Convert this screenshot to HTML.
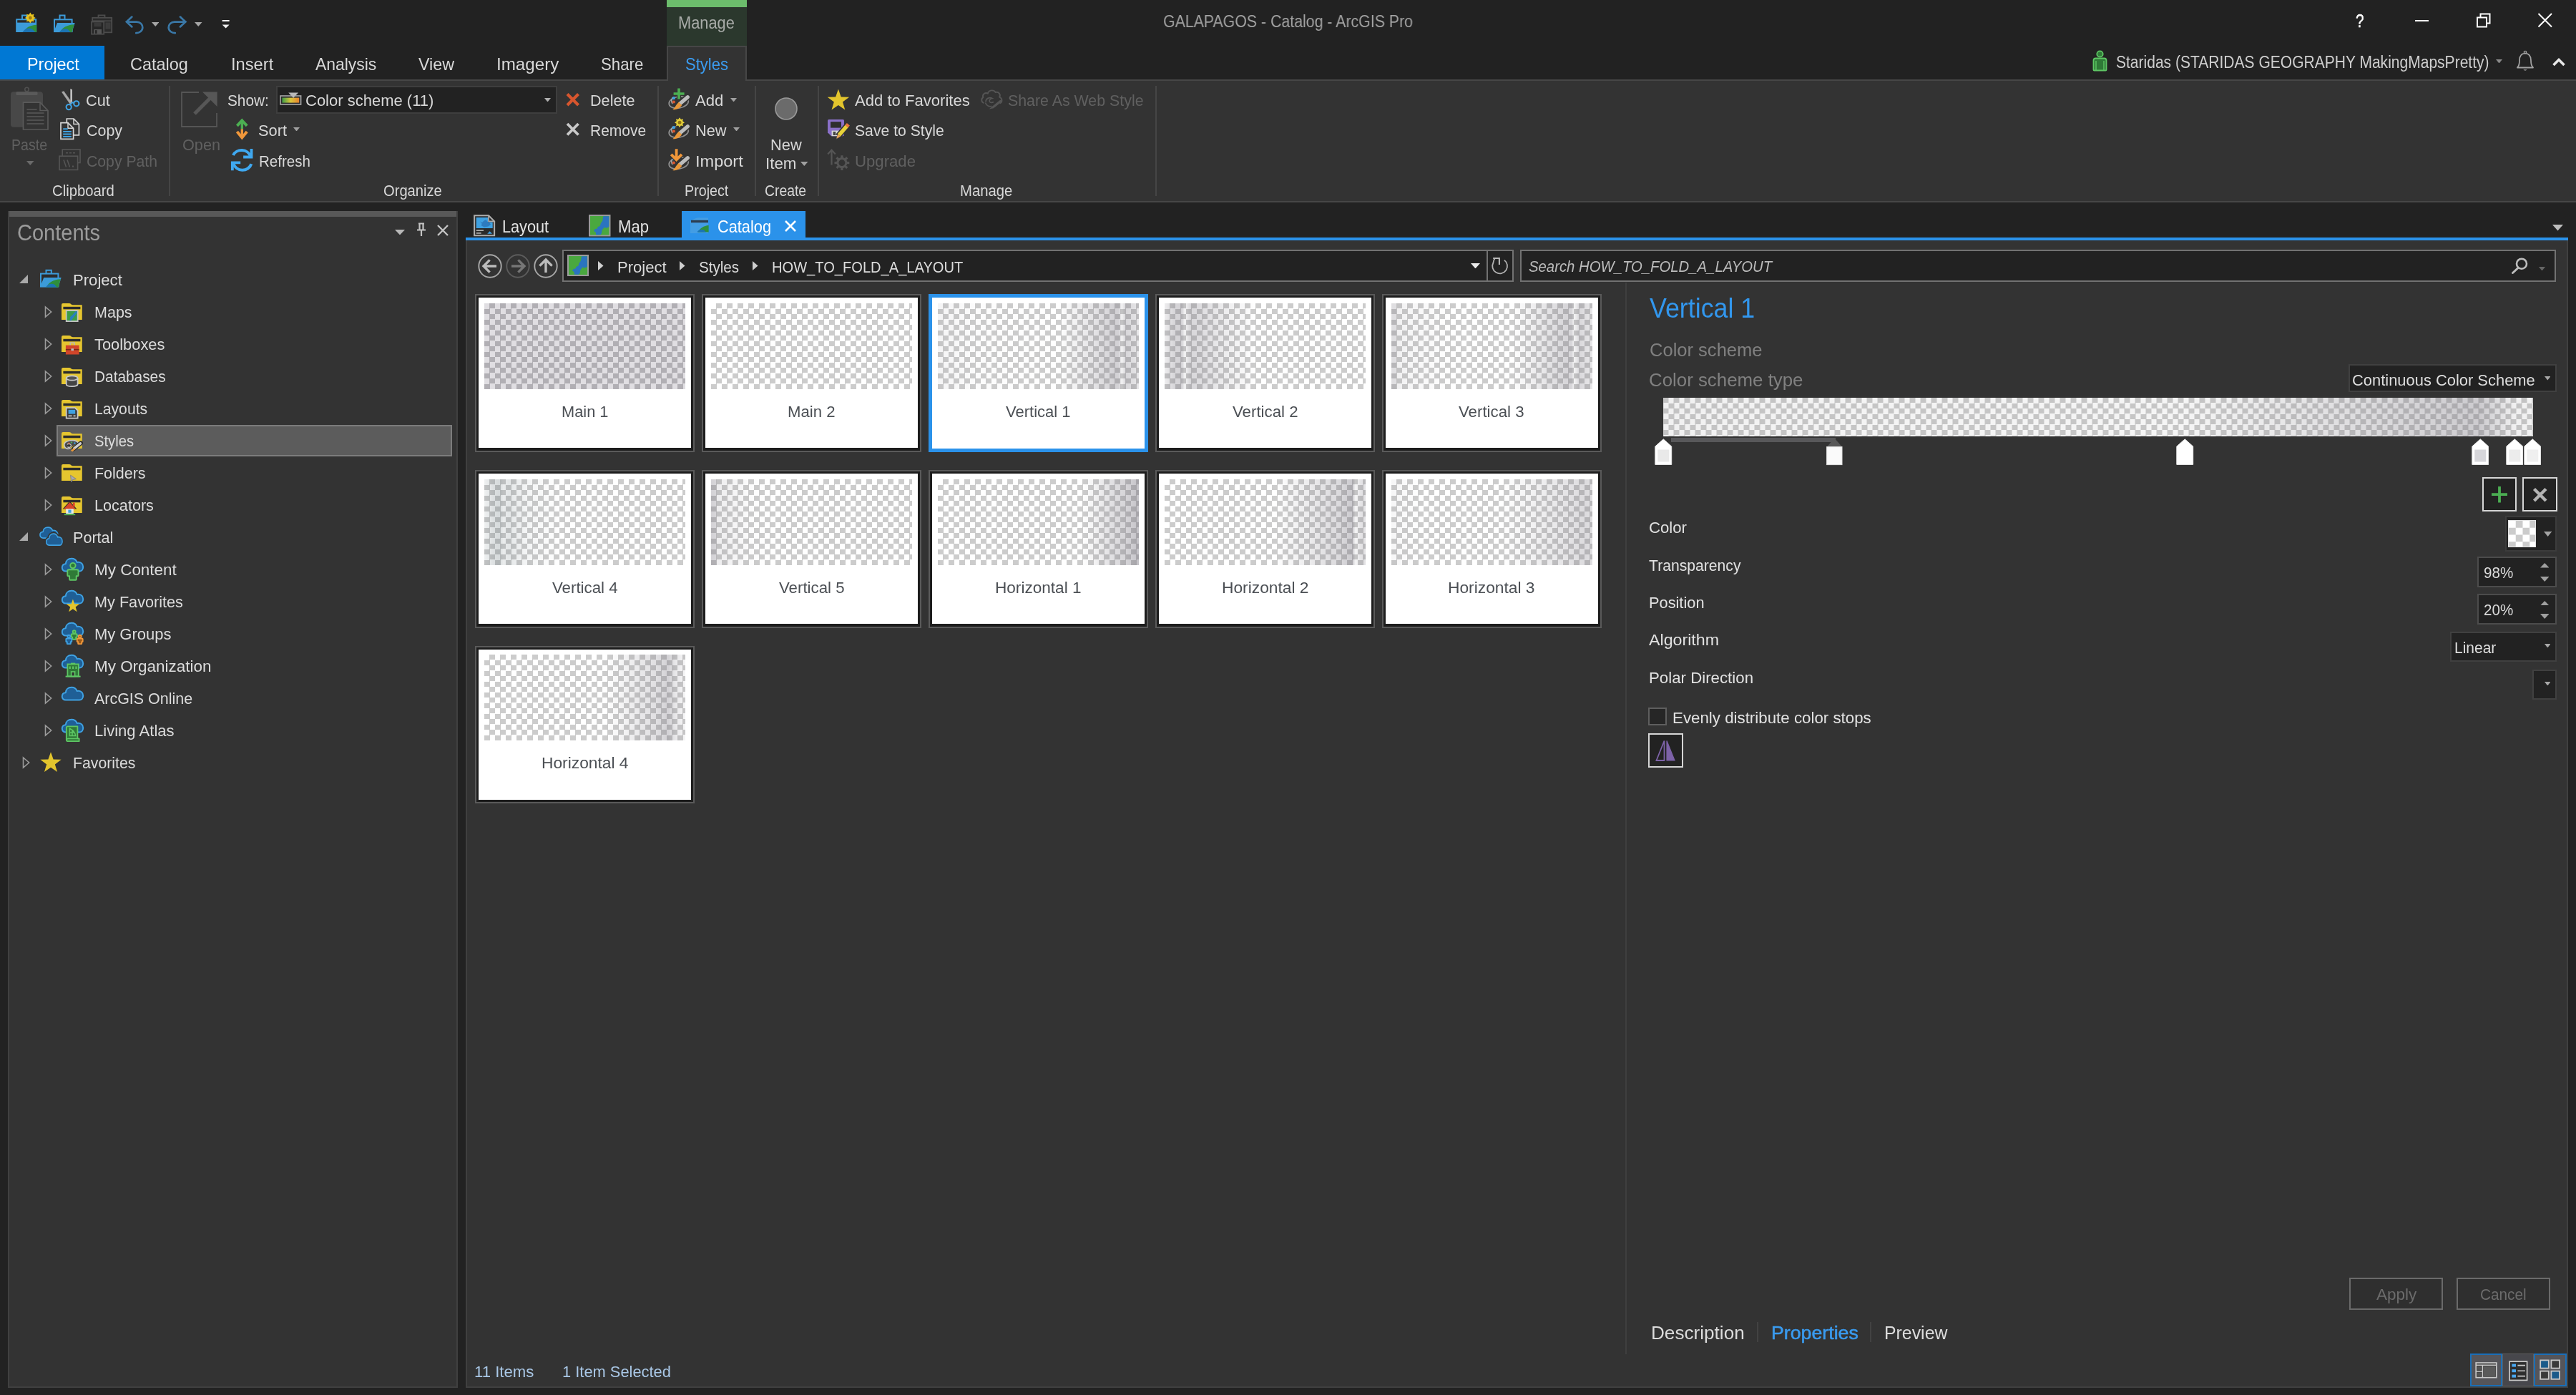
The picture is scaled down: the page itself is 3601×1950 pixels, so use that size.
<!DOCTYPE html>
<html><head><meta charset="utf-8"><title>ArcGIS Pro</title><style>
html,body{margin:0;padding:0}
body{width:3601px;height:1950px;overflow:hidden;background:#222222;position:relative;font-family:"Liberation Sans",sans-serif}
#root{position:absolute;left:0;top:0;width:3601px;height:1950px;will-change:transform}
.a{position:absolute;box-sizing:border-box;display:block}
.t{position:absolute;white-space:pre;line-height:1;display:block;transform-origin:0 0}
</style></head><body><div id="root">
<div class="a" style="left:932px;top:0px;width:112px;height:10px;background:#6cbd6c;"></div>
<div class="a" style="left:932px;top:10px;width:112px;height:54px;background:#2b382d;"></div>
<span class="t" style="left:947.75px;top:21px;font-size:23px;color:#a9aca9;transform:scaleX(0.9474);">Manage</span>
<span class="t" style="left:1626.00px;top:19px;font-size:23px;color:#a3a3a3;transform:scaleX(0.9266);">GALAPAGOS - Catalog - ArcGIS Pro</span>
<span class="t" style="left:3293.20px;top:16px;font-size:26px;color:#ffffff;transform:scaleX(0.8024);-webkit-text-stroke:0.5px #ffffff;">?</span>
<svg class="a" style="left:3370px;top:10px;" width="40" height="40" viewBox="0 0 40 40"><path d="M6 19H25" stroke="#fff" stroke-width="2" fill="none"/></svg>
<svg class="a" style="left:3455px;top:10px;" width="40" height="40" viewBox="0 0 40 40"><path d="M8 14.5H21V27.5H8Z M12.5 14V9.5H25.5V22.5H21.5" stroke="#fff" stroke-width="2" fill="none"/></svg>
<svg class="a" style="left:3540px;top:10px;" width="40" height="40" viewBox="0 0 40 40"><path d="M8.5 9L27 27.5M27 9L8.5 27.5" stroke="#fff" stroke-width="2" fill="none"/></svg>
<div class="a" style="left:0px;top:64px;width:146px;height:47px;background:#0078d4;"></div>
<span class="t" style="left:37.50px;top:78px;font-size:24px;color:#ffffff;transform:scaleX(0.9741);">Project</span>
<span class="t" style="left:181.75px;top:78px;font-size:24px;color:#d8d8d8;transform:scaleX(0.9761);">Catalog</span>
<div class="a" style="left:0px;top:111px;width:3601px;height:172px;background:#333333;border-top:2px solid #464646;border-bottom:2px solid #464646;"></div>
<div class="a" style="left:932px;top:64px;width:112px;height:49px;background:#333333;border:2px solid #464646;border-bottom:none;"></div>
<span class="t" style="left:958.00px;top:78px;font-size:24px;color:#3b9cf0;transform:scaleX(0.9181);">Styles</span>
<span class="t" style="left:322.50px;top:78px;font-size:24px;color:#d8d8d8;transform:scaleX(0.9871);">Insert</span>
<span class="t" style="left:440.50px;top:78px;font-size:24px;color:#d8d8d8;transform:scaleX(0.9538);">Analysis</span>
<span class="t" style="left:585.00px;top:78px;font-size:24px;color:#d8d8d8;transform:scaleX(0.9681);">View</span>
<span class="t" style="left:693.50px;top:78px;font-size:24px;color:#d8d8d8;transform:scaleX(1.0065);">Imagery</span>
<span class="t" style="left:839.75px;top:78px;font-size:24px;color:#d8d8d8;transform:scaleX(0.9253);">Share</span>
<span class="t" style="left:2958.00px;top:76px;font-size:23px;color:#cfcfcf;transform:scaleX(0.9142);">Staridas (STARIDAS GEOGRAPHY MakingMapsPretty)</span>
<svg class="a" style="left:3489px;top:82.5px;" width="9" height="5.5" viewBox="0 0 9 5.5"><path d="M0 0H9L4.5 5.5Z" fill="#8a8a8a"/></svg>
<svg class="a" style="left:3566px;top:78px;" width="22" height="18" viewBox="0 0 22 18"><path d="M3.5 13L11 5.5L18.5 13" stroke="#e8e8e8" stroke-width="3.6" fill="none"/></svg>
<div class="a" style="left:236px;top:120px;width:1.5px;height:154px;background:#454545;"></div>
<div class="a" style="left:919px;top:120px;width:1.5px;height:154px;background:#454545;"></div>
<div class="a" style="left:1055px;top:120px;width:1.5px;height:154px;background:#454545;"></div>
<div class="a" style="left:1143px;top:120px;width:1.5px;height:154px;background:#454545;"></div>
<div class="a" style="left:1615px;top:120px;width:1.5px;height:154px;background:#454545;"></div>
<span class="t" style="left:16.25px;top:191.5px;font-size:22px;color:#606060;transform:scaleX(0.8888);">Paste</span>
<svg class="a" style="left:37px;top:225px;" width="10.5" height="6" viewBox="0 0 10.5 6"><path d="M0 0H10.5L5.25 6Z" fill="#6a6a6a"/></svg>
<span class="t" style="left:120.25px;top:130px;font-size:22px;color:#d8d8d8;transform:scaleX(0.9859);">Cut</span>
<span class="t" style="left:120.50px;top:171.5px;font-size:22px;color:#d8d8d8;transform:scaleX(0.9737);">Copy</span>
<span class="t" style="left:120.50px;top:214.5px;font-size:22px;color:#606060;transform:scaleX(0.9638);">Copy Path</span>
<span class="t" style="left:73.25px;top:255.75px;font-size:22px;color:#d8d8d8;transform:scaleX(0.9213);">Clipboard</span>
<span class="t" style="left:255.00px;top:191.5px;font-size:22px;color:#606060;transform:scaleX(0.9849);">Open</span>
<span class="t" style="left:318.00px;top:130px;font-size:22px;color:#d8d8d8;transform:scaleX(0.9446);">Show:</span>
<div class="a" style="left:386px;top:119.5px;width:393px;height:39px;background:#222222;border:2px solid #3e3e3e;"></div>
<span class="t" style="left:427.00px;top:130px;font-size:22px;color:#d8d8d8;">Color scheme (11)</span>
<svg class="a" style="left:761px;top:136.5px;" width="9" height="5.5" viewBox="0 0 9 5.5"><path d="M0 0H9L4.5 5.5Z" fill="#b0b0b0"/></svg>
<span class="t" style="left:361.25px;top:171.5px;font-size:22px;color:#d8d8d8;transform:scaleX(0.9914);">Sort</span>
<svg class="a" style="left:410px;top:177.5px;" width="9" height="5.5" viewBox="0 0 9 5.5"><path d="M0 0H9L4.5 5.5Z" fill="#a0a0a0"/></svg>
<span class="t" style="left:361.75px;top:214.5px;font-size:22px;color:#d8d8d8;transform:scaleX(0.9348);">Refresh</span>
<span class="t" style="left:536.25px;top:255.75px;font-size:22px;color:#d8d8d8;transform:scaleX(0.9157);">Organize</span>
<span class="t" style="left:824.50px;top:130px;font-size:22px;color:#d8d8d8;transform:scaleX(0.9827);">Delete</span>
<span class="t" style="left:824.50px;top:171.5px;font-size:22px;color:#d8d8d8;transform:scaleX(0.9551);">Remove</span>
<svg class="a" style="left:790px;top:128px;" width="22" height="22" viewBox="0 0 22 22"><path d="M3 3.5L18.5 19M18.5 3.5L3 19" stroke="#d8562e" stroke-width="4.2" fill="none"/></svg>
<svg class="a" style="left:790px;top:169px;" width="22" height="22" viewBox="0 0 22 22"><path d="M3 4L18.5 19.5M18.5 4L3 19.5" stroke="#c9c9c9" stroke-width="3.8" fill="none"/></svg>
<span class="t" style="left:972.25px;top:130px;font-size:22px;color:#d8d8d8;transform:scaleX(1.0029);">Add</span>
<svg class="a" style="left:1020.75px;top:136.5px;" width="9" height="5.5" viewBox="0 0 9 5.5"><path d="M0 0H9L4.5 5.5Z" fill="#a0a0a0"/></svg>
<span class="t" style="left:972.25px;top:171.5px;font-size:22px;color:#d8d8d8;transform:scaleX(0.9872);">New</span>
<svg class="a" style="left:1024.5px;top:177.5px;" width="9" height="5.5" viewBox="0 0 9 5.5"><path d="M0 0H9L4.5 5.5Z" fill="#a0a0a0"/></svg>
<span class="t" style="left:972.25px;top:214.5px;font-size:22px;color:#d8d8d8;transform:scaleX(1.0706);">Import</span>
<span class="t" style="left:957.00px;top:255.75px;font-size:22px;color:#d8d8d8;transform:scaleX(0.8946);">Project</span>
<svg class="a" style="left:1082px;top:135px;" width="34" height="34" viewBox="0 0 34 34"><circle cx="17" cy="17" r="15" fill="#6b6b6b" stroke="#9a9a9a" stroke-width="1.6"/></svg>
<span class="t" style="left:1077.25px;top:191.5px;font-size:22px;color:#d8d8d8;transform:scaleX(0.9928);">New</span>
<span class="t" style="left:1069.75px;top:217.75px;font-size:22px;color:#d8d8d8;transform:scaleX(1.0166);">Item</span>
<svg class="a" style="left:1119px;top:225.5px;" width="10.5" height="6" viewBox="0 0 10.5 6"><path d="M0 0H10.5L5.25 6Z" fill="#a0a0a0"/></svg>
<span class="t" style="left:1069.00px;top:255.75px;font-size:22px;color:#d8d8d8;transform:scaleX(0.8785);">Create</span>
<span class="t" style="left:1195.25px;top:130px;font-size:22px;color:#d8d8d8;transform:scaleX(1.0035);">Add to Favorites</span>
<span class="t" style="left:1195.25px;top:171.5px;font-size:22px;color:#d8d8d8;transform:scaleX(0.9624);">Save to Style</span>
<span class="t" style="left:1195.25px;top:214.5px;font-size:22px;color:#606060;transform:scaleX(1.0072);">Upgrade</span>
<span class="t" style="left:1409.25px;top:130px;font-size:22px;color:#606060;transform:scaleX(0.9706);">Share As Web Style</span>
<span class="t" style="left:1341.75px;top:255.75px;font-size:22px;color:#d8d8d8;transform:scaleX(0.9213);">Manage</span>
<div class="a" style="left:11.4px;top:294.7px;width:628.4px;height:1645.3px;background:#333333;border:2px solid #404040;"></div>
<div class="a" style="left:13.4px;top:294.7px;width:624.6px;height:8.7px;background:#585858;"></div>
<span class="t" style="left:23.70px;top:310px;font-size:31px;color:#9b9b9b;transform:scaleX(0.9358);">Contents</span>
<svg class="a" style="left:552px;top:320.5px;" width="14" height="7.5" viewBox="0 0 14 7.5"><path d="M0 0H14L7.0 7.5Z" fill="#b8b8b8"/></svg>
<svg class="a" style="left:580px;top:310px;" width="18" height="22" viewBox="0 0 18 22"><path d="M5 2.5H13M6.5 2.5V11M11.5 2.5V11M3 11.5H15M9 12V20" stroke="#c4c4c4" stroke-width="2.2" fill="none"/></svg>
<svg class="a" style="left:609px;top:312px;" width="20" height="20" viewBox="0 0 20 20"><path d="M3 3L17 17M17 3L3 17" stroke="#c4c4c4" stroke-width="2.4" fill="none"/></svg>
<div class="a" style="left:79px;top:593.5px;width:553px;height:44px;background:#5c5c5c;border:2px solid #7c7c7c;"></div>
<span class="t" style="left:101.60px;top:381.3px;font-size:22px;color:#dcdcdc;transform:scaleX(1.0049);">Project</span>
<svg class="a" style="left:26px;top:383px;" width="14" height="14" viewBox="0 0 14 14"><path d="M13 1V13H1Z" fill="#a9a9a9"/></svg>
<span class="t" style="left:131.90px;top:426.3px;font-size:22px;color:#dcdcdc;transform:scaleX(0.9779);">Maps</span>
<svg class="a" style="left:61.6px;top:427px;" width="12" height="18" viewBox="0 0 12 18"><path d="M1.5 2L9.6 9L1.5 16Z" fill="none" stroke="#9c9c9c" stroke-width="1.6"/></svg>
<span class="t" style="left:131.90px;top:471.3px;font-size:22px;color:#dcdcdc;transform:scaleX(0.9933);">Toolboxes</span>
<svg class="a" style="left:61.6px;top:472px;" width="12" height="18" viewBox="0 0 12 18"><path d="M1.5 2L9.6 9L1.5 16Z" fill="none" stroke="#9c9c9c" stroke-width="1.6"/></svg>
<span class="t" style="left:131.90px;top:516.3px;font-size:22px;color:#dcdcdc;transform:scaleX(0.9469);">Databases</span>
<svg class="a" style="left:61.6px;top:517px;" width="12" height="18" viewBox="0 0 12 18"><path d="M1.5 2L9.6 9L1.5 16Z" fill="none" stroke="#9c9c9c" stroke-width="1.6"/></svg>
<span class="t" style="left:131.90px;top:561.3px;font-size:22px;color:#dcdcdc;transform:scaleX(0.9618);">Layouts</span>
<svg class="a" style="left:61.6px;top:562px;" width="12" height="18" viewBox="0 0 12 18"><path d="M1.5 2L9.6 9L1.5 16Z" fill="none" stroke="#9c9c9c" stroke-width="1.6"/></svg>
<span class="t" style="left:131.90px;top:606.3px;font-size:22px;color:#dcdcdc;transform:scaleX(0.9198);">Styles</span>
<svg class="a" style="left:61.6px;top:607px;" width="12" height="18" viewBox="0 0 12 18"><path d="M1.5 2L9.6 9L1.5 16Z" fill="none" stroke="#9c9c9c" stroke-width="1.6"/></svg>
<span class="t" style="left:131.90px;top:651.3px;font-size:22px;color:#dcdcdc;transform:scaleX(0.9759);">Folders</span>
<svg class="a" style="left:61.6px;top:652px;" width="12" height="18" viewBox="0 0 12 18"><path d="M1.5 2L9.6 9L1.5 16Z" fill="none" stroke="#9c9c9c" stroke-width="1.6"/></svg>
<span class="t" style="left:131.90px;top:696.3px;font-size:22px;color:#dcdcdc;transform:scaleX(0.9826);">Locators</span>
<svg class="a" style="left:61.6px;top:697px;" width="12" height="18" viewBox="0 0 12 18"><path d="M1.5 2L9.6 9L1.5 16Z" fill="none" stroke="#9c9c9c" stroke-width="1.6"/></svg>
<span class="t" style="left:101.60px;top:741.3px;font-size:22px;color:#dcdcdc;transform:scaleX(0.9815);">Portal</span>
<svg class="a" style="left:26px;top:743px;" width="14" height="14" viewBox="0 0 14 14"><path d="M13 1V13H1Z" fill="#a9a9a9"/></svg>
<span class="t" style="left:131.90px;top:786.3px;font-size:22px;color:#dcdcdc;transform:scaleX(1.0206);">My Content</span>
<svg class="a" style="left:61.6px;top:787px;" width="12" height="18" viewBox="0 0 12 18"><path d="M1.5 2L9.6 9L1.5 16Z" fill="none" stroke="#9c9c9c" stroke-width="1.6"/></svg>
<span class="t" style="left:131.90px;top:831.3px;font-size:22px;color:#dcdcdc;transform:scaleX(0.9841);">My Favorites</span>
<svg class="a" style="left:61.6px;top:832px;" width="12" height="18" viewBox="0 0 12 18"><path d="M1.5 2L9.6 9L1.5 16Z" fill="none" stroke="#9c9c9c" stroke-width="1.6"/></svg>
<span class="t" style="left:131.90px;top:876.3px;font-size:22px;color:#dcdcdc;">My Groups</span>
<svg class="a" style="left:61.6px;top:877px;" width="12" height="18" viewBox="0 0 12 18"><path d="M1.5 2L9.6 9L1.5 16Z" fill="none" stroke="#9c9c9c" stroke-width="1.6"/></svg>
<span class="t" style="left:131.90px;top:921.3px;font-size:22px;color:#dcdcdc;transform:scaleX(1.0201);">My Organization</span>
<svg class="a" style="left:61.6px;top:922px;" width="12" height="18" viewBox="0 0 12 18"><path d="M1.5 2L9.6 9L1.5 16Z" fill="none" stroke="#9c9c9c" stroke-width="1.6"/></svg>
<span class="t" style="left:131.90px;top:966.3px;font-size:22px;color:#dcdcdc;transform:scaleX(0.9751);">ArcGIS Online</span>
<svg class="a" style="left:61.6px;top:967px;" width="12" height="18" viewBox="0 0 12 18"><path d="M1.5 2L9.6 9L1.5 16Z" fill="none" stroke="#9c9c9c" stroke-width="1.6"/></svg>
<span class="t" style="left:131.90px;top:1011.3px;font-size:22px;color:#dcdcdc;transform:scaleX(1.0027);">Living Atlas</span>
<svg class="a" style="left:61.6px;top:1012px;" width="12" height="18" viewBox="0 0 12 18"><path d="M1.5 2L9.6 9L1.5 16Z" fill="none" stroke="#9c9c9c" stroke-width="1.6"/></svg>
<span class="t" style="left:101.60px;top:1056.3px;font-size:22px;color:#dcdcdc;transform:scaleX(0.9661);">Favorites</span>
<svg class="a" style="left:31.2px;top:1057px;" width="12" height="18" viewBox="0 0 12 18"><path d="M1.5 2L9.6 9L1.5 16Z" fill="none" stroke="#9c9c9c" stroke-width="1.6"/></svg>
<span class="t" style="left:702.00px;top:304.5px;font-size:24px;color:#e4e4e4;transform:scaleX(0.9022);">Layout</span>
<span class="t" style="left:863.50px;top:304.5px;font-size:24px;color:#e4e4e4;transform:scaleX(0.9212);">Map</span>
<div class="a" style="left:952.5px;top:294.5px;width:173px;height:39px;background:#2b92ea;"></div>
<span class="t" style="left:1003.25px;top:304.5px;font-size:24px;color:#ffffff;transform:scaleX(0.9066);">Catalog</span>
<svg class="a" style="left:1095px;top:306px;" width="20" height="20" viewBox="0 0 20 20"><path d="M3 3L17 17M17 3L3 17" stroke="#fff" stroke-width="2.6" fill="none"/></svg>
<svg class="a" style="left:3567.75px;top:314px;" width="15" height="8.5" viewBox="0 0 15 8.5"><path d="M0 0H15L7.5 8.5Z" fill="#bdbdbd"/></svg>
<div class="a" style="left:650.7px;top:332px;width:2939.5px;height:4.3px;background:#2b92ea;"></div>
<div class="a" style="left:650.7px;top:336px;width:2939.5px;height:1604px;background:#333333;border-left:2px solid #404040;border-right:2px solid #404040;border-bottom:2px solid #404040;"></div>
<svg class="a" style="left:666.6px;top:353.5px;" width="36" height="36" viewBox="0 0 36 36"><circle cx="18" cy="18" r="15.7" fill="none" stroke="#a8a8a8" stroke-width="1.9"/><path d="M27 18H10M17.6 9.4L9 18L17.6 26.6" stroke="#bcbcbc" stroke-width="3.4" fill="none"/></svg>
<svg class="a" style="left:705.75px;top:353.5px;" width="36" height="36" viewBox="0 0 36 36"><circle cx="18" cy="18" r="15.7" fill="none" stroke="#5c5c5c" stroke-width="1.9"/><path d="M9 18H26M18.4 9.4L27 18L18.4 26.6" stroke="#767676" stroke-width="3.4" fill="none"/></svg>
<svg class="a" style="left:745.1px;top:353.5px;" width="36" height="36" viewBox="0 0 36 36"><circle cx="18" cy="18" r="15.7" fill="none" stroke="#a8a8a8" stroke-width="1.9"/><path d="M18 27V10M9.4 17.6L18 9L26.6 17.6" stroke="#bcbcbc" stroke-width="3.4" fill="none"/></svg>
<div class="a" style="left:786.25px;top:349px;width:1329.25px;height:45px;background:#222222;border:2px solid #727272;"></div>
<div class="a" style="left:2078px;top:350px;width:2px;height:43px;background:#727272;"></div>
<svg class="a" style="left:836px;top:365px;" width="8" height="13" viewBox="0 0 8 13"><path d="M0 0L7.5 6.5L0 13Z" fill="#d0d0d0"/></svg>
<svg class="a" style="left:950px;top:365px;" width="8" height="13" viewBox="0 0 8 13"><path d="M0 0L7.5 6.5L0 13Z" fill="#d0d0d0"/></svg>
<svg class="a" style="left:1052px;top:365px;" width="8" height="13" viewBox="0 0 8 13"><path d="M0 0L7.5 6.5L0 13Z" fill="#d0d0d0"/></svg>
<span class="t" style="left:863.30px;top:363px;font-size:22px;color:#dcdcdc;transform:scaleX(1.0034);">Project</span>
<span class="t" style="left:977.20px;top:363px;font-size:22px;color:#dcdcdc;transform:scaleX(0.9365);">Styles</span>
<span class="t" style="left:1078.70px;top:363px;font-size:22px;color:#dcdcdc;transform:scaleX(0.9135);">HOW_TO_FOLD_A_LAYOUT</span>
<svg class="a" style="left:2055.7px;top:367.6px;" width="13" height="7.4" viewBox="0 0 13 7.4"><path d="M0 0H13L6.5 7.4Z" fill="#ececec"/></svg>
<svg class="a" style="left:2083px;top:358px;" width="28" height="28" viewBox="0 0 28 28"><path d="M19.9 5.6A10.4 10.4 0 1 1 4.5 9Q4.8 5.4 6.6 3.4" stroke="#b2b2b2" stroke-width="1.8" fill="none"/><path d="M4.2 3H13.9M12.9 2V12.1" stroke="#b8b8b8" stroke-width="2.1" fill="none"/></svg>
<div class="a" style="left:2125px;top:349px;width:1448px;height:45px;background:#222222;border:2px solid #727272;"></div>
<span class="t" style="left:2136.60px;top:362px;font-size:22px;color:#bcbcbc;transform:scaleX(0.9234);font-style:italic;">Search HOW_TO_FOLD_A_LAYOUT</span>
<svg class="a" style="left:3508px;top:356px;" width="30" height="30" viewBox="0 0 30 30"><circle cx="17" cy="12.7" r="7" stroke="#bdbdbd" stroke-width="2.6" fill="none"/><path d="M12 18.5L4.5 25.5" stroke="#bdbdbd" stroke-width="3" stroke-linecap="round"/></svg>
<svg class="a" style="left:3549px;top:372.5px;" width="9" height="5.5" viewBox="0 0 9 5.5"><path d="M0 0H9L4.5 5.5Z" fill="#666"/></svg>
<span class="t" style="left:663.20px;top:1907.3px;font-size:22px;color:#a9c7e6;transform:scaleX(1.0067);">11 Items</span>
<span class="t" style="left:785.50px;top:1907.3px;font-size:22px;color:#a9c7e6;transform:scaleX(0.9937);">1 Item Selected</span>
<div class="a" style="left:664.4px;top:411.25px;width:306.85px;height:220.8px;background:#1d1d1d;border:2px solid #5a5a5a;"></div>
<div class="a" style="left:669.4px;top:416.25px;width:296.7px;height:210.2px;background:#ffffff;"></div>
<div class="a" style="left:677.20px;top:424.00px;width:281px;height:120px;background-color:#e0dee2;background-image:conic-gradient(#b1afb4 25%,#e0dee2 0 50%,#b1afb4 0 75%,#e0dee2 0);background-size:15px 15px;background-position:0 0"></div>
<span class="t" style="left:784.65px;top:565.15px;font-size:22.5px;color:#4b4f54;transform:scaleX(0.9700);">Main 1</span>
<div class="a" style="left:981.3499999999999px;top:411.25px;width:306.85px;height:220.8px;background:#1d1d1d;border:2px solid #5a5a5a;"></div>
<div class="a" style="left:986.3499999999999px;top:416.25px;width:296.7px;height:210.2px;background:#ffffff;"></div>
<div class="a" style="left:994.15px;top:424.00px;width:281px;height:120px;background-color:#ffffff;background-image:conic-gradient(#cccccc 25%,#ffffff 0 50%,#cccccc 0 75%,#ffffff 0);background-size:15px 15px;background-position:0 0"></div>
<span class="t" style="left:1101.10px;top:565.15px;font-size:22.5px;color:#4b4f54;transform:scaleX(0.9849);">Main 2</span>
<div class="a" style="left:1298.3px;top:411.25px;width:306.85px;height:220.8px;background:#ffffff;border:5px solid #2b92ea;"></div>
<div class="a" style="left:1311.10px;top:424.00px;width:281px;height:120px;background-color:#ffffff;background-image:conic-gradient(#cccccc 25%,#ffffff 0 50%,#cccccc 0 75%,#ffffff 0);background-size:15px 15px;background-position:0 0"></div>
<div class="a" style="left:1311.10px;top:424.00px;width:281px;height:120px;background:linear-gradient(90deg,rgba(110,106,118,0.07) 0.0%,rgba(110,106,118,0.02) 20.0%,rgba(110,106,118,0) 60.0%,rgba(110,106,118,0.3) 88.5%,rgba(110,106,118,0.3) 90.0%,rgba(110,106,118,0.08) 91.5%,rgba(110,106,118,0.28) 93.5%,rgba(110,106,118,0.16) 100.0%)"></div>
<span class="t" style="left:1406.05px;top:565.15px;font-size:22.5px;color:#4b4f54;transform:scaleX(0.9779);">Vertical 1</span>
<div class="a" style="left:1615.25px;top:411.25px;width:306.85px;height:220.8px;background:#1d1d1d;border:2px solid #5a5a5a;"></div>
<div class="a" style="left:1620.25px;top:416.25px;width:296.7px;height:210.2px;background:#ffffff;"></div>
<div class="a" style="left:1628.05px;top:424.00px;width:281px;height:120px;background-color:#ffffff;background-image:conic-gradient(#cccccc 25%,#ffffff 0 50%,#cccccc 0 75%,#ffffff 0);background-size:15px 15px;background-position:0 0"></div>
<div class="a" style="left:1628.05px;top:424.00px;width:281px;height:120px;background:linear-gradient(90deg,rgba(110,106,118,0.12) 0.0%,rgba(110,106,118,0.28) 5.0%,rgba(110,106,118,0.3) 8.5%,rgba(110,106,118,0.08) 10.0%,rgba(110,106,118,0.27) 13.0%,rgba(110,106,118,0) 45.0%,rgba(110,106,118,0) 100.0%)"></div>
<span class="t" style="left:1722.50px;top:565.15px;font-size:22.5px;color:#4b4f54;transform:scaleX(0.9887);">Vertical 2</span>
<div class="a" style="left:1932.1999999999998px;top:411.25px;width:306.85px;height:220.8px;background:#1d1d1d;border:2px solid #5a5a5a;"></div>
<div class="a" style="left:1937.1999999999998px;top:416.25px;width:296.7px;height:210.2px;background:#ffffff;"></div>
<div class="a" style="left:1945.00px;top:424.00px;width:281px;height:120px;background-color:#ffffff;background-image:conic-gradient(#cccccc 25%,#ffffff 0 50%,#cccccc 0 75%,#ffffff 0);background-size:15px 15px;background-position:0 0"></div>
<div class="a" style="left:1945.00px;top:424.00px;width:281px;height:120px;background:linear-gradient(90deg,rgba(110,106,118,0.22) 0.0%,rgba(110,106,118,0.22) 2.3%,rgba(110,106,118,0.1) 2.5%,rgba(110,106,118,0.06) 10.0%,rgba(110,106,118,0) 30.0%,rgba(110,106,118,0) 60.0%,rgba(110,106,118,0.28) 87.0%,rgba(110,106,118,0.28) 89.5%,rgba(110,106,118,0.07) 91.0%,rgba(110,106,118,0.26) 93.5%,rgba(110,106,118,0.15) 100.0%)"></div>
<span class="t" style="left:2039.45px;top:565.15px;font-size:22.5px;color:#4b4f54;transform:scaleX(0.9887);">Vertical 3</span>
<div class="a" style="left:664.4px;top:656.875px;width:306.85px;height:220.8px;background:#1d1d1d;border:2px solid #5a5a5a;"></div>
<div class="a" style="left:669.4px;top:661.875px;width:296.7px;height:210.2px;background:#ffffff;"></div>
<div class="a" style="left:677.20px;top:669.62px;width:281px;height:120px;background-color:#ffffff;background-image:conic-gradient(#cccccc 25%,#ffffff 0 50%,#cccccc 0 75%,#ffffff 0);background-size:15px 15px;background-position:0 0"></div>
<div class="a" style="left:677.20px;top:669.62px;width:281px;height:120px;background:linear-gradient(90deg,rgba(95,112,118,0.1) 0.0%,rgba(95,112,118,0.22) 5.0%,rgba(95,112,118,0.26) 7.5%,rgba(95,112,118,0.13) 9.5%,rgba(95,112,118,0.17) 12.0%,rgba(95,112,118,0.08) 20.0%,rgba(95,112,118,0) 38.0%,rgba(95,112,118,0) 100.0%)"></div>
<span class="t" style="left:771.65px;top:810.775px;font-size:22.5px;color:#4b4f54;transform:scaleX(0.9887);">Vertical 4</span>
<div class="a" style="left:981.3499999999999px;top:656.875px;width:306.85px;height:220.8px;background:#1d1d1d;border:2px solid #5a5a5a;"></div>
<div class="a" style="left:986.3499999999999px;top:661.875px;width:296.7px;height:210.2px;background:#ffffff;"></div>
<div class="a" style="left:994.15px;top:669.62px;width:281px;height:120px;background-color:#ffffff;background-image:conic-gradient(#cccccc 25%,#ffffff 0 50%,#cccccc 0 75%,#ffffff 0);background-size:15px 15px;background-position:0 0"></div>
<div class="a" style="left:994.15px;top:669.62px;width:281px;height:120px;background:linear-gradient(90deg,rgba(110,106,118,0.3) 0.0%,rgba(110,106,118,0.28) 2.4%,rgba(110,106,118,0.12) 3.0%,rgba(110,106,118,0.08) 10.0%,rgba(110,106,118,0.02) 20.0%,rgba(110,106,118,0) 30.0%,rgba(110,106,118,0) 100.0%)"></div>
<span class="t" style="left:1088.60px;top:810.775px;font-size:22.5px;color:#4b4f54;transform:scaleX(0.9887);">Vertical 5</span>
<div class="a" style="left:1298.3px;top:656.875px;width:306.85px;height:220.8px;background:#1d1d1d;border:2px solid #5a5a5a;"></div>
<div class="a" style="left:1303.3px;top:661.875px;width:296.7px;height:210.2px;background:#ffffff;"></div>
<div class="a" style="left:1311.10px;top:669.62px;width:281px;height:120px;background-color:#ffffff;background-image:conic-gradient(#cccccc 25%,#ffffff 0 50%,#cccccc 0 75%,#ffffff 0);background-size:15px 15px;background-position:0 0"></div>
<div class="a" style="left:1311.10px;top:669.62px;width:281px;height:120px;background:linear-gradient(90deg,rgba(110,106,118,0) 0.0%,rgba(110,106,118,0) 72.0%,rgba(110,106,118,0.2) 86.0%,rgba(110,106,118,0.28) 93.0%,rgba(110,106,118,0.34) 97.0%,rgba(110,106,118,0.42) 100.0%)"></div>
<span class="t" style="left:1391.05px;top:810.775px;font-size:22.5px;color:#4b4f54;transform:scaleX(1.0037);">Horizontal 1</span>
<div class="a" style="left:1615.25px;top:656.875px;width:306.85px;height:220.8px;background:#1d1d1d;border:2px solid #5a5a5a;"></div>
<div class="a" style="left:1620.25px;top:661.875px;width:296.7px;height:210.2px;background:#ffffff;"></div>
<div class="a" style="left:1628.05px;top:669.62px;width:281px;height:120px;background-color:#ffffff;background-image:conic-gradient(#cccccc 25%,#ffffff 0 50%,#cccccc 0 75%,#ffffff 0);background-size:15px 15px;background-position:0 0"></div>
<div class="a" style="left:1628.05px;top:669.62px;width:281px;height:120px;background:linear-gradient(90deg,rgba(110,106,118,0) 0.0%,rgba(110,106,118,0) 55.0%,rgba(110,106,118,0.26) 88.0%,rgba(110,106,118,0.36) 93.5%,rgba(110,106,118,0.06) 95.0%,rgba(110,106,118,0.18) 97.5%,rgba(110,106,118,0.2) 100.0%)"></div>
<span class="t" style="left:1707.50px;top:810.775px;font-size:22.5px;color:#4b4f54;transform:scaleX(1.0120);">Horizontal 2</span>
<div class="a" style="left:1932.1999999999998px;top:656.875px;width:306.85px;height:220.8px;background:#1d1d1d;border:2px solid #5a5a5a;"></div>
<div class="a" style="left:1937.1999999999998px;top:661.875px;width:296.7px;height:210.2px;background:#ffffff;"></div>
<div class="a" style="left:1945.00px;top:669.62px;width:281px;height:120px;background-color:#ffffff;background-image:conic-gradient(#cccccc 25%,#ffffff 0 50%,#cccccc 0 75%,#ffffff 0);background-size:15px 15px;background-position:0 0"></div>
<div class="a" style="left:1945.00px;top:669.62px;width:281px;height:120px;background:linear-gradient(90deg,rgba(110,106,118,0.06) 0.0%,rgba(110,106,118,0) 15.0%,rgba(110,106,118,0) 55.0%,rgba(110,106,118,0.24) 97.0%,rgba(110,106,118,0.2) 100.0%)"></div>
<span class="t" style="left:2024.45px;top:810.775px;font-size:22.5px;color:#4b4f54;transform:scaleX(1.0120);">Horizontal 3</span>
<div class="a" style="left:664.4px;top:902.5px;width:306.85px;height:220.8px;background:#1d1d1d;border:2px solid #5a5a5a;"></div>
<div class="a" style="left:669.4px;top:907.5px;width:296.7px;height:210.2px;background:#ffffff;"></div>
<div class="a" style="left:677.20px;top:915.25px;width:281px;height:120px;background-color:#ffffff;background-image:conic-gradient(#cccccc 25%,#ffffff 0 50%,#cccccc 0 75%,#ffffff 0);background-size:15px 15px;background-position:0 0"></div>
<div class="a" style="left:677.20px;top:915.25px;width:281px;height:120px;background:linear-gradient(90deg,rgba(110,106,118,0) 0.0%,rgba(110,106,118,0) 60.0%,rgba(110,106,118,0.13) 75.0%,rgba(110,106,118,0.22) 86.0%,rgba(110,106,118,0.3) 91.5%,rgba(110,106,118,0.16) 95.0%,rgba(110,106,118,0.06) 100.0%)"></div>
<span class="t" style="left:756.65px;top:1056.4px;font-size:22.5px;color:#4b4f54;transform:scaleX(1.0120);">Horizontal 4</span>
<div class="a" style="left:2272px;top:395px;width:1.5px;height:1498px;background:#3f3f3f;"></div>
<span class="t" style="left:2305.75px;top:412.25px;font-size:38px;color:#3297ee;transform:scaleX(0.9421);">Vertical 1</span>
<span class="t" style="left:2306.25px;top:476.5px;font-size:25px;color:#808080;transform:scaleX(1.0212);">Color scheme</span>
<span class="t" style="left:2304.50px;top:518.5px;font-size:25px;color:#808080;transform:scaleX(1.0339);">Color scheme type</span>
<div class="a" style="left:3282.5px;top:509.25px;width:291.5px;height:39px;background:#222222;border:2px solid #404040;"></div>
<span class="t" style="left:3288.25px;top:520.75px;font-size:22px;color:#dedede;transform:scaleX(0.9959);">Continuous Color Scheme</span>
<svg class="a" style="left:3556.5px;top:526.25px;" width="8.5" height="5.5" viewBox="0 0 8.5 5.5"><path d="M0 0H8.5L4.25 5.5Z" fill="#a8a8a8"/></svg>
<div class="a" style="left:2324.5px;top:556.25px;width:1216.75px;height:53.75px;background-color:#f5f5f5;background-image:conic-gradient(#c6c6c6 25%,#f5f5f5 0 50%,#c6c6c6 0 75%,#f5f5f5 0);background-size:15px 15px;background-position:7.5px 0"></div>
<div class="a" style="left:2324.5px;top:556.25px;width:1216.75px;height:53.75px;background:linear-gradient(90deg,rgba(110,106,118,0.03) 0%,rgba(110,106,118,0.01) 19.68%,rgba(110,106,118,0) 59.95%,rgba(110,106,118,0.30) 93.90%,rgba(110,106,118,0.04) 97.84%,rgba(110,106,118,0.02) 100%)"></div>
<div class="a" style="left:2336.2px;top:611.9px;width:230px;height:6.2px;background:#58585a;"></div>
<svg class="a" style="left:2313.15px;top:613px;" width="24.5" height="37.5" viewBox="0 0 24.5 37.5"><path d="M12.25 0.8L23.7 11V36.4H0.8V11Z" fill="#ffffff" stroke="#e9e9e9" stroke-width="1"/><rect x="4.3" y="15.5" width="16" height="17" fill="#e9e9e9"/></svg>
<svg class="a" style="left:3042.0px;top:613px;" width="24.5" height="37.5" viewBox="0 0 24.5 37.5"><path d="M12.25 0.8L23.7 11V36.4H0.8V11Z" fill="#ffffff" stroke="#e9e9e9" stroke-width="1"/></svg>
<svg class="a" style="left:3454.5px;top:613px;" width="24.5" height="37.5" viewBox="0 0 24.5 37.5"><path d="M12.25 0.8L23.7 11V36.4H0.8V11Z" fill="#ffffff" stroke="#e9e9e9" stroke-width="1"/><rect x="4.3" y="15.5" width="16" height="17" fill="#d6d6da"/></svg>
<svg class="a" style="left:3502.75px;top:613px;" width="24.5" height="37.5" viewBox="0 0 24.5 37.5"><path d="M12.25 0.8L23.7 11V36.4H0.8V11Z" fill="#ffffff" stroke="#e9e9e9" stroke-width="1"/><rect x="4.3" y="15.5" width="16" height="17" fill="#ececec"/></svg>
<svg class="a" style="left:3527.75px;top:613px;" width="24.5" height="37.5" viewBox="0 0 24.5 37.5"><path d="M12.25 0.8L23.7 11V36.4H0.8V11Z" fill="#ffffff" stroke="#e9e9e9" stroke-width="1"/><rect x="4.3" y="15.5" width="16" height="17" fill="#efefef"/></svg>
<svg class="a" style="left:2552px;top:612px;" width="25" height="38.5" viewBox="0 0 25 38.5"><path d="M12.4 0.5L23 12.5H2Z" fill="#585858"/><rect x="1.6" y="12.6" width="21.4" height="25" fill="#fafafa" stroke="#e0e0e0" stroke-width="1"/></svg>
<div class="a" style="left:3469.5px;top:667px;width:48.75px;height:48px;background:#222222;border:2px solid #d6d6d6;"></div>
<svg class="a" style="left:3481px;top:678px;" width="26" height="26" viewBox="0 0 26 26"><path d="M13 2V24.5M2 13.2H24" stroke="#4bad52" stroke-width="3.8" fill="none"/></svg>
<div class="a" style="left:3526.25px;top:667px;width:48.25px;height:48px;background:#222222;border:2px solid #d6d6d6;"></div>
<svg class="a" style="left:3540px;top:681px;" width="22" height="22" viewBox="0 0 22 22"><path d="M2.5 2.5L19 19M19 2.5L2.5 19" stroke="#b4b4b4" stroke-width="4.4" fill="none"/></svg>
<span class="t" style="left:2304.50px;top:726.6px;font-size:22.5px;color:#e2e2e2;transform:scaleX(0.9856);">Color</span>
<div class="a" style="left:3501.5px;top:721.25px;width:72px;height:49.5px;background:#222222;border:2px solid #3c3c3c;"></div>
<div class="a" style="left:3506.25px;top:726.75px;width:39px;height:38.25px;border:1px solid #e4e4e4;background-color:#fff;background-image:conic-gradient(#cbcbcb 25%,#fff 0 50%,#cbcbcb 0 75%,#fff 0);background-size:19.5px 19.5px;background-position:0 0"></div>
<svg class="a" style="left:3555.75px;top:742.5px;" width="11.25" height="7" viewBox="0 0 11.25 7"><path d="M0 0H11.25L5.625 7Z" fill="#a4a4a4"/></svg>
<span class="t" style="left:2304.50px;top:780px;font-size:22.5px;color:#e2e2e2;transform:scaleX(0.9398);">Transparency</span>
<div class="a" style="left:3462.75px;top:777.5px;width:111.25px;height:43px;background:#222222;border:2px solid #4c4c4c;"></div>
<span class="t" style="left:3472.00px;top:789.5px;font-size:22px;color:#dcdcdc;transform:scaleX(0.9370);">98%</span>
<svg class="a" style="left:3550.75px;top:787.0px;" width="12.5" height="6.5" viewBox="0 0 12.5 6.5"><path d="M0 6.5H12.5L6.25 0Z" fill="#a0a0a0"/></svg>
<svg class="a" style="left:3550.75px;top:805.75px;" width="12.5" height="7" viewBox="0 0 12.5 7"><path d="M0 0H12.5L6.25 7Z" fill="#a0a0a0"/></svg>
<span class="t" style="left:2304.50px;top:832px;font-size:22.5px;color:#e2e2e2;transform:scaleX(0.9681);">Position</span>
<div class="a" style="left:3462.75px;top:830px;width:111.25px;height:43px;background:#222222;border:2px solid #4c4c4c;"></div>
<span class="t" style="left:3472.00px;top:842px;font-size:22px;color:#dcdcdc;transform:scaleX(0.9370);">20%</span>
<svg class="a" style="left:3550.75px;top:839.5px;" width="12.5" height="6.5" viewBox="0 0 12.5 6.5"><path d="M0 6.5H12.5L6.25 0Z" fill="#a0a0a0"/></svg>
<svg class="a" style="left:3550.75px;top:858.25px;" width="12.5" height="7" viewBox="0 0 12.5 7"><path d="M0 0H12.5L6.25 7Z" fill="#a0a0a0"/></svg>
<span class="t" style="left:2304.50px;top:884px;font-size:22.5px;color:#e2e2e2;transform:scaleX(1.0311);">Algorithm</span>
<div class="a" style="left:3425px;top:883.2px;width:149px;height:42.2px;background:#222222;border:2px solid #404040;"></div>
<span class="t" style="left:3431.30px;top:895.4px;font-size:22px;color:#dedede;transform:scaleX(0.9532);">Linear</span>
<svg class="a" style="left:3556.5px;top:899.5px;" width="8.5" height="5.5" viewBox="0 0 8.5 5.5"><path d="M0 0H8.5L4.25 5.5Z" fill="#a8a8a8"/></svg>
<span class="t" style="left:2304.50px;top:936.5px;font-size:22.5px;color:#e2e2e2;transform:scaleX(0.9895);">Polar Direction</span>
<div class="a" style="left:3539.5px;top:935.8px;width:34.5px;height:42.7px;background:#222222;border:2px solid #404040;"></div>
<svg class="a" style="left:3556.5px;top:952.5px;" width="8.5" height="5.5" viewBox="0 0 8.5 5.5"><path d="M0 0H8.5L4.25 5.5Z" fill="#a8a8a8"/></svg>
<div class="a" style="left:2304.2px;top:988.9px;width:25.6px;height:25.5px;background:#262626;border:2px solid #5e5e5e;"></div>
<span class="t" style="left:2338.00px;top:993.3px;font-size:22.5px;color:#e2e2e2;transform:scaleX(0.9915);">Evenly distribute color stops</span>
<div class="a" style="left:2304.2px;top:1025.4px;width:48.5px;height:47.8px;background:#222222;border:2px solid #d6d6d6;"></div>
<svg class="a" style="left:2312px;top:1033px;" width="34" height="33" viewBox="0 0 34 33"><path d="M14.5 2.5V30H3.5Z" fill="none" stroke="#7d62a8" stroke-width="1.8"/><path d="M18 2.5V30H29Z" fill="#7d62a8" stroke="#7d62a8" stroke-width="1.2"/></svg>
<div class="a" style="left:3284.25px;top:1786.25px;width:131px;height:44.5px;background:#2f2f2f;border:2px solid #6a6a6a;"></div>
<span class="t" style="left:3322.10px;top:1799.4px;font-size:22px;color:#6c6c6c;transform:scaleX(1.0232);">Apply</span>
<div class="a" style="left:3434.25px;top:1786.25px;width:130.75px;height:44.5px;background:#2f2f2f;border:2px solid #6a6a6a;"></div>
<span class="t" style="left:3467.10px;top:1799.4px;font-size:22px;color:#6c6c6c;transform:scaleX(0.9440);">Cancel</span>
<span class="t" style="left:2307.90px;top:1850.3px;font-size:26px;color:#dcdcdc;transform:scaleX(1.0050);">Description</span>
<div class="a" style="left:2456px;top:1848px;width:2px;height:28px;background:#424242;"></div>
<span class="t" style="left:2475.50px;top:1850.3px;font-size:26px;color:#3a9bef;transform:scaleX(1.0278);-webkit-text-stroke:0.55px #3a9bef;">Properties</span>
<div class="a" style="left:2614px;top:1848px;width:2px;height:28px;background:#424242;"></div>
<span class="t" style="left:2633.80px;top:1850.3px;font-size:26px;color:#dcdcdc;transform:scaleX(0.9561);">Preview</span>
<div class="a" style="left:3452.75px;top:1892.25px;width:45px;height:45.75px;background:#55555a;border:2px solid #1b6fb8;"></div>
<div class="a" style="left:3497.75px;top:1892.25px;width:44.4px;height:45.75px;background:#47474c;border:1px solid #5e5e5e;"></div>
<div class="a" style="left:3542.1px;top:1892.25px;width:45.65px;height:45.75px;background:#55555a;border:2px solid #1b6fb8;"></div>
<svg class="a" style="left:20px;top:16px;" width="34" height="32" viewBox="0 0 34 32"><path d="M11 10.5V5.6H17V10.5" stroke="#3c9bd9" stroke-width="2" fill="none"/><rect x="2.2" y="10.2" width="29" height="18.8" fill="#3c9bd9"/><rect x="4.2" y="12.2" width="25" height="3.4" fill="#2b2b2b"/><path d="M13 29C16 22.5 22 19.3 31.2 18.8V29Z" fill="#2e8f3c"/><path d="M11.5 29C14 24.5 19 22.3 24.5 24.2L29.5 29Z" fill="#1b74b4"/><g transform="translate(22.3 9)"><path d="M0 -7.4L1.6 -5H-1.6ZM0 7.4L1.6 5H-1.6ZM-7.4 0L-5 1.6V-1.6ZM7.4 0L5 1.6V-1.6ZM-5.2 -5.2L-2.4 -4.6L-4.6 -2.4ZM5.2 -5.2L2.4 -4.6L4.6 -2.4ZM-5.2 5.2L-2.4 4.6L-4.6 2.4ZM5.2 5.2L2.4 4.6L4.6 2.4Z" fill="#e9c51f"/><circle r="5.3" fill="#e9c51f"/><circle r="2.4" fill="#a07c16"/></g></svg>
<svg class="a" style="left:73px;top:18px;" width="34" height="30" viewBox="0 0 34 30"><path d="M10.5 8.4V3.6H17.5V8.4" stroke="#3c9bd9" stroke-width="2" fill="none"/><rect x="3" y="9.3" width="24.6" height="16.8" fill="#2b2b2b" stroke="#3c9bd9" stroke-width="2"/><path d="M7 14H31.6L27.6 27H2Z" fill="#3c9bd9"/><path d="M11 27C14 20.5 21 16.8 30.6 16.3L27.6 27Z" fill="#2e8f3c"/><path d="M10 27C12.5 23 17 21.2 22 23L25.5 27Z" fill="#1b74b4"/></svg>
<svg class="a" style="left:126px;top:18px;" width="34" height="32" viewBox="0 0 34 32"><path d="M11.5 6.5V3.3H20.5V6.5" stroke="#4c4c4c" stroke-width="1.8" fill="none"/><rect x="3.2" y="6.8" width="27" height="20.5" fill="#2a2a2a" stroke="#4c4c4c" stroke-width="1.8"/><path d="M3.2 11.2H30" stroke="#4c4c4c" stroke-width="1.6"/><rect x="21.5" y="13.5" width="7" height="9" fill="#3c3c3c"/><rect x="2" y="12.5" width="17.2" height="17.2" fill="#262626" stroke="#4c4c4c" stroke-width="1.8"/><rect x="5.5" y="13.6" width="10" height="5.6" fill="#3a3a3a"/><rect x="5.2" y="23" width="10.8" height="6" fill="#555"/><rect x="7" y="24.2" width="2.6" height="4.6" fill="#262626"/></svg>
<svg class="a" style="left:172px;top:20px;" width="32" height="30" viewBox="0 0 32 30"><path d="M12.4 3.6L4.9 10.6L12.4 17.4M5.2 10.6H19C24 10.6 27.3 14 27.3 18.6C27.3 23 23.2 26 18.2 26.2" stroke="#3a78a7" stroke-width="2.7" fill="none" stroke-linecap="round"/></svg>
<svg class="a" style="left:232px;top:20px;" width="32" height="30" viewBox="0 0 32 30"><path d="M19.9 3.6L27.4 10.6L19.9 17.4M27.1 10.6H12C7 10.6 3.7 14 3.7 18.6C3.7 23 7.8 26 12.8 26.2" stroke="#3a78a7" stroke-width="2.7" fill="none" stroke-linecap="round"/></svg>
<svg class="a" style="left:211.5px;top:31px;" width="10.5" height="6" viewBox="0 0 10.5 6"><path d="M0 0H10.5L5.25 6Z" fill="#a6a6a6"/></svg>
<svg class="a" style="left:272px;top:31px;" width="10.5" height="6" viewBox="0 0 10.5 6"><path d="M0 0H10.5L5.25 6Z" fill="#a6a6a6"/></svg>
<svg class="a" style="left:309px;top:26px;" width="14" height="15" viewBox="0 0 14 15"><rect x="1.6" y="2" width="10" height="2" fill="#f0f0f0"/><path d="M1.6 8.4H11.6L6.6 13.6Z" fill="#f0f0f0"/></svg>
<svg class="a" style="left:2923px;top:68px;" width="26" height="32" viewBox="0 0 26 32"><circle cx="12.5" cy="7.5" r="4.2" fill="#2f7a37" stroke="#5fc765" stroke-width="1.8"/><path d="M3.5 29.5V16.5Q3.5 13.5 6.5 13.5H18.5Q21.5 13.5 21.5 16.5V29.5Q21.5 30.5 20.5 30.5H4.5Q3.5 30.5 3.5 29.5Z" fill="#2f7a37" stroke="#5fc765" stroke-width="1.8"/><path d="M7 17V30M18 17V30" stroke="#5fc765" stroke-width="1.4"/></svg>
<svg class="a" style="left:3514px;top:68px;" width="32" height="34" viewBox="0 0 32 34"><path d="M5 26.5H27C24.5 24 24 21 24 16.5C24 10 20.8 6.6 16 6.6C11.2 6.6 8 10 8 16.5C8 21 7.5 24 5 26.5Z" fill="none" stroke="#a2a2a2" stroke-width="1.8" stroke-linejoin="round"/><circle cx="16" cy="5" r="1.7" fill="none" stroke="#a2a2a2" stroke-width="1.3"/><path d="M13.4 29.3Q16 32 18.6 29.3Z" fill="#a2a2a2"/></svg>
<svg class="a" style="left:13px;top:120px;" width="58" height="64" viewBox="0 0 58 64"><circle cx="24.5" cy="5" r="2.7" fill="none" stroke="#505050" stroke-width="1.6"/><rect x="2" y="8.3" width="45" height="49.5" rx="4" fill="#484848"/><rect x="9.5" y="8.3" width="30" height="4.6" rx="1.5" fill="#5a5a5a"/><path d="M19.5 23.2H43L54 34.5V61H19.5Z" fill="#333" stroke="#5a5a5a" stroke-width="1.7"/><path d="M43 23.2V34.5H54" fill="none" stroke="#5a5a5a" stroke-width="1.5"/><path d="M24.5 33H38.5M24.5 38H48.5M24.5 43H48.5M24.5 48H48.5M24.5 53H48.5" stroke="#5a5a5a" stroke-width="1.5"/></svg>
<svg class="a" style="left:83px;top:122px;" width="32" height="34" viewBox="0 0 32 34"><path d="M3 6.5L6.2 5.2L18 22L15.5 24.5Z" fill="#a5a5a5"/><path d="M15.4 2L17.8 3.3V21.5L15.4 19Z" fill="#cfcfcf"/><circle cx="13.2" cy="27.6" r="3.6" fill="none" stroke="#3fa1e2" stroke-width="2.1"/><circle cx="23.8" cy="22.8" r="3.6" fill="none" stroke="#3fa1e2" stroke-width="2.1"/><path d="M15.5 24.2L17.6 21.3L21 21.5" stroke="#3fa1e2" stroke-width="1.8" fill="none"/></svg>
<svg class="a" style="left:82px;top:163px;" width="32" height="34" viewBox="0 0 32 34"><path d="M11.3 3H21L28.4 10.5V25.8H11.3Z" fill="#333" stroke="#d6d6d6" stroke-width="1.7"/><path d="M21 3V10.5H28.4" fill="none" stroke="#d6d6d6" stroke-width="1.5"/><path d="M3 8.7H13L20.6 16.3V31.3H3Z" fill="#333" stroke="#d6d6d6" stroke-width="1.7"/><path d="M13 8.7V16.3H20.6" fill="none" stroke="#d6d6d6" stroke-width="1.5"/><path d="M6.2 17.2H12.8M6.2 21H17.8M6.2 24.5H17.8M6.2 28H17.8" stroke="#3fa1e2" stroke-width="1.9"/></svg>
<svg class="a" style="left:81px;top:206px;" width="34" height="34" viewBox="0 0 34 34"><rect x="6.2" y="3" width="24.8" height="18.5" fill="#333" stroke="#555" stroke-width="1.6"/><path d="M11 7.8H14M16 7.8H19M21 7.8H24" stroke="#555" stroke-width="1.6"/><rect x="2" y="12.2" width="25.6" height="19.2" fill="#333" stroke="#555" stroke-width="1.6"/><path d="M8 17.5L11.5 27.5M13 17.5L16.5 27.5" stroke="#555" stroke-width="1.6"/><rect x="20" y="25.5" width="2" height="2.2" fill="#555"/></svg>
<svg class="a" style="left:250px;top:124px;" width="58" height="58" viewBox="0 0 58 58"><path d="M28 5H4V53H53V34" fill="none" stroke="#555" stroke-width="1.8"/><path d="M22 35L47.5 9.5" stroke="#575757" stroke-width="5.2"/><path d="M33 4.4H53.6V25Z" fill="#575757"/></svg>
<svg class="a" style="left:389px;top:127px;" width="34" height="22" viewBox="0 0 34 22"><defs><linearGradient id="cs"><stop offset="0" stop-color="#3f9c45"/><stop offset=".5" stop-color="#d9c63c"/><stop offset="1" stop-color="#e8822c"/></linearGradient></defs><rect x="3" y="7" width="28.6" height="12" fill="#2a2a2a" stroke="#a9a9a9" stroke-width="1.6"/><rect x="5.4" y="9.6" width="23.8" height="7" fill="url(#cs)"/><path d="M14.2 2.4H28L21.1 10Z" fill="#b9b9b9"/></svg>
<svg class="a" style="left:326px;top:164px;" width="24" height="34" viewBox="0 0 24 34"><path d="M12.3 5V16.5" stroke="#4caf52" stroke-width="3.4"/><path d="M12.3 16.5V28" stroke="#f0973a" stroke-width="3.4"/><path d="M5.4 11.8L12.3 4.4L19.2 11.8" stroke="#4caf52" stroke-width="4" fill="none"/><path d="M5.4 20L12.3 28.4L19.2 20" stroke="#f0973a" stroke-width="4" fill="none"/></svg>
<svg class="a" style="left:320px;top:206px;" width="36" height="34" viewBox="0 0 36 34"><path d="M5.9 11A12.8 11.6 0 0 1 30 12.4" stroke="#3fa8f0" stroke-width="4" fill="none"/><path d="M31.5 1.9V13.5H20.1" stroke="#3fa8f0" stroke-width="3.8" fill="none"/><path d="M6.4 22.4A12.8 11.6 0 0 0 31.3 23.2" stroke="#3fa8f0" stroke-width="4" fill="none"/><path d="M4.85 32.3V21.3H16.2" stroke="#3fa8f0" stroke-width="3.8" fill="none"/></svg>
<svg class="a" style="left:932px;top:120px;" width="36" height="36" viewBox="0 0 36 36"><ellipse cx="16.75" cy="23.1" rx="13.7" ry="8" fill="none" stroke="#8f8f8f" stroke-width="1.7" transform="rotate(-10 16.75 23.1)"/><path d="M8 25.2Q5.4 21.5 8.2 16.2" stroke="#a9a9a9" stroke-width="1.5" fill="none"/><circle cx="9.9" cy="17.1" r="2.2" fill="#3fa1e2"/><circle cx="9.9" cy="22.5" r="2.1" fill="#d8562e"/><path d="M29.3 15.8L17.6 25.8" stroke="#333" stroke-width="8.4" stroke-linecap="round"/><path d="M29.3 15.8L19 24.6" stroke="#bdbdbd" stroke-width="5.2" stroke-linecap="round"/><path d="M16.8 22.8L21.2 27C19 30.8 14.5 33.6 8.4 33.3C11.4 31 12.2 27.6 16.8 22.8Z" fill="#e8973a"/><path d="M17 3.4V18.4M9.4 11H24.8" stroke="#333" stroke-width="6"/><path d="M17 3.6V18.4M9.6 11H24.6" stroke="#4caf52" stroke-width="3.6"/></svg>
<svg class="a" style="left:932px;top:161.25px;" width="36" height="36" viewBox="0 0 36 36"><ellipse cx="16.75" cy="23.1" rx="13.7" ry="8" fill="none" stroke="#8f8f8f" stroke-width="1.7" transform="rotate(-10 16.75 23.1)"/><path d="M8 25.2Q5.4 21.5 8.2 16.2" stroke="#a9a9a9" stroke-width="1.5" fill="none"/><circle cx="9.9" cy="17.1" r="2.2" fill="#3fa1e2"/><circle cx="9.9" cy="22.5" r="2.1" fill="#d8562e"/><path d="M29.3 15.8L17.6 25.8" stroke="#333" stroke-width="8.4" stroke-linecap="round"/><path d="M29.3 15.8L19 24.6" stroke="#bdbdbd" stroke-width="5.2" stroke-linecap="round"/><path d="M16.8 22.8L21.2 27C19 30.8 14.5 33.6 8.4 33.3C11.4 31 12.2 27.6 16.8 22.8Z" fill="#e8973a"/><g transform="translate(18 10.2)"><circle r="7.6" fill="#333"/><path d="M0 -7L1.5 -4.6H-1.5ZM0 7L1.5 4.6H-1.5ZM-7 0L-4.6 1.5V-1.5ZM7 0L4.6 1.5V-1.5ZM-5 -5L-2.2 -4.2L-4.2 -2.2ZM5 -5L2.2 -4.2L4.2 -2.2ZM-5 5L-2.2 4.2L-4.2 2.2ZM5 5L2.2 4.2L4.2 2.2Z" fill="#e9d33a"/><circle r="4.9" fill="#e9d33a"/><circle r="2.5" fill="#8f7414"/></g></svg>
<svg class="a" style="left:932px;top:205px;" width="36" height="36" viewBox="0 0 36 36"><ellipse cx="16.75" cy="23.1" rx="13.7" ry="8" fill="none" stroke="#8f8f8f" stroke-width="1.7" transform="rotate(-10 16.75 23.1)"/><path d="M8 25.2Q5.4 21.5 8.2 16.2" stroke="#a9a9a9" stroke-width="1.5" fill="none"/><circle cx="9.9" cy="17.1" r="2.2" fill="#3fa1e2"/><circle cx="9.9" cy="22.5" r="2.1" fill="#d8562e"/><path d="M29.3 15.8L17.6 25.8" stroke="#333" stroke-width="8.4" stroke-linecap="round"/><path d="M29.3 15.8L19 24.6" stroke="#bdbdbd" stroke-width="5.2" stroke-linecap="round"/><path d="M16.8 22.8L21.2 27C19 30.8 14.5 33.6 8.4 33.3C11.4 31 12.2 27.6 16.8 22.8Z" fill="#e8973a"/><path d="M13.6 3V16M6 10.6L13.6 18.2L21.2 10.6" stroke="#333" stroke-width="6.5" fill="none"/><path d="M13.6 3.2V16M6.2 10.8L13.6 18.2L21 10.8" stroke="#f0973a" stroke-width="3.8" fill="none"/></svg>
<svg class="a" style="left:1154px;top:122px;" width="36" height="34" viewBox="0 0 36 34"><polygon points="17.90,2.60 21.66,13.42 33.12,13.66 23.99,20.58 27.30,31.54 17.90,25.00 8.50,31.54 11.81,20.58 2.68,13.66 14.14,13.42" fill="#e3c52d"/></svg>
<svg class="a" style="left:1154px;top:164px;" width="36" height="34" viewBox="0 0 36 34"><path d="M3 4.6Q3 3 4.6 3H24.4Q26 3 26 4.6V24.6Q26 26.2 24.4 26.2H8L3 21.2Z" fill="#8a70c8"/><rect x="7" y="6.2" width="15" height="8.4" fill="#2e2e2e"/><rect x="8.6" y="18.6" width="12.4" height="7.6" fill="#d9d9d9"/><rect x="10.6" y="20" width="3.6" height="5" fill="#444"/><path d="M30.8 11L17.5 26.5" stroke="#333" stroke-width="8.5"/><path d="M30 12L19 24.8" stroke="#e8d23a" stroke-width="5.4"/><path d="M31.9 9.8L29.4 12.7" stroke="#e8773a" stroke-width="5.4"/><path d="M17.2 23.2L14.8 30.6L21.2 26.6Z" fill="#e8a35a"/><path d="M15.6 28.2L14.8 30.6L16.9 29.3Z" fill="#555"/></svg>
<svg class="a" style="left:1154px;top:206px;" width="36" height="34" viewBox="0 0 36 34"><path d="M8.5 4V24.5M3.2 9.5L8.5 3.6L13.8 9.5" stroke="#555" stroke-width="2.2" fill="none"/><g transform="translate(22.9 21.6)"><circle r="6" fill="none" stroke="#555" stroke-width="3"/><g stroke="#555" stroke-width="3.2"><path d="M0 -6.4V-10.4" transform="rotate(0)"/><path d="M0 -6.4V-10.4" transform="rotate(45)"/><path d="M0 -6.4V-10.4" transform="rotate(90)"/><path d="M0 -6.4V-10.4" transform="rotate(135)"/><path d="M0 -6.4V-10.4" transform="rotate(180)"/><path d="M0 -6.4V-10.4" transform="rotate(225)"/><path d="M0 -6.4V-10.4" transform="rotate(270)"/><path d="M0 -6.4V-10.4" transform="rotate(315)"/></g></g></svg>
<svg class="a" style="left:1369px;top:122px;" width="36" height="34" viewBox="0 0 36 34"><path d="M6.5 22C3 21 2 16.5 5.2 14.2C3.8 9.8 8.4 6.8 11.8 8.6C13.4 3.6 20.2 3 22.6 7C27.2 5.8 30.2 10.2 28.2 13.6C32.6 15.6 32.4 21 28.6 22.6" fill="none" stroke="#555" stroke-width="1.9"/><path d="M9 20.6C9 15.6 14 13.4 18 15.4C15 16 13.6 18 14.4 20C15.2 22 18.6 21.6 20 20.4" fill="none" stroke="#555" stroke-width="1.7"/><path d="M29.5 19.5L20 27.2" stroke="#555" stroke-width="3.4" stroke-linecap="round"/><path d="M18.6 26.2L13.6 30.6L20.2 29.2Z" fill="#555"/><path d="M8.4 21.6C10 26.6 15 27.2 17.2 26.4" fill="none" stroke="#555" stroke-width="1.7"/></svg>
<svg class="a" style="left:54px;top:375px;" width="36" height="30" viewBox="0 0 36 30"><path d="M10.5 7V2.8H17.8V7" stroke="#3c9bd9" stroke-width="2" fill="none"/><rect x="3" y="7.6" width="24.4" height="17.6" fill="#2b2b2b" stroke="#3c9bd9" stroke-width="2"/><path d="M7.2 13H31.6L27.6 26.4H2Z" fill="#3c9bd9"/><path d="M11 26.4C14 19.6 21 15.8 30.7 15.3L27.6 26.4Z" fill="#2e8f3c"/><path d="M10 26.4C12.5 22.4 17 20.6 22 22.4L25.5 26.4Z" fill="#1b74b4"/></svg>
<svg class="a" style="left:84px;top:422px;" width="34" height="32" viewBox="0 0 34 32"><path d="M2 25V4Q2 2 4 2H12.5Q14.4 2 15.4 3.2Q16.3 4.3 18 4.3H30.75V25Z" fill="#e6c62f"/><rect x="4.4" y="6.8" width="24" height="3.5" fill="#2c2c2c"/><rect x="8.7" y="12.1" width="16" height="15" fill="#3f9c45" stroke="#c4c4c4" stroke-width="1.8"/><path d="M21.5 13.2L23.8 13.2L23.8 15L19.5 21L17.5 23.5L15.5 26.2H13.2L14.5 22.6L13.6 21.4L17.5 18Z" fill="#2a7fc0"/></svg>
<svg class="a" style="left:84px;top:467px;" width="34" height="32" viewBox="0 0 34 32"><path d="M2 25V4Q2 2 4 2H12.5Q14.4 2 15.4 3.2Q16.3 4.3 18 4.3H30.75V25Z" fill="#e6c62f"/><rect x="4.4" y="6.8" width="24" height="3.5" fill="#2c2c2c"/><rect x="14.2" y="12.2" width="5.8" height="5" fill="none" stroke="#b8b8b8" stroke-width="1.5"/><rect x="7.9" y="15.6" width="18.7" height="12.9" fill="#d0452a"/><path d="M7.9 21.7H26.6" stroke="#7a2a1a" stroke-width="1.6"/><rect x="15.4" y="20.2" width="3.6" height="3" fill="#bdbdbd"/></svg>
<svg class="a" style="left:84px;top:512px;" width="34" height="32" viewBox="0 0 34 32"><path d="M2 25V4Q2 2 4 2H12.5Q14.4 2 15.4 3.2Q16.3 4.3 18 4.3H30.75V25Z" fill="#e6c62f"/><rect x="4.4" y="6.8" width="24" height="3.5" fill="#2c2c2c"/><path d="M8.7 16.5V25.3C8.7 27 12.2 28.2 16.6 28.2C21 28.2 24.6 27 24.6 25.3V16.5" fill="#444" stroke="#c9c9c9" stroke-width="1.8"/><ellipse cx="16.65" cy="16.5" rx="7.95" ry="3.2" fill="#555" stroke="#c9c9c9" stroke-width="1.8"/></svg>
<svg class="a" style="left:84px;top:557px;" width="34" height="32" viewBox="0 0 34 32"><path d="M2 25V4Q2 2 4 2H12.5Q14.4 2 15.4 3.2Q16.3 4.3 18 4.3H30.75V25Z" fill="#e6c62f"/><rect x="4.4" y="6.8" width="24" height="3.5" fill="#2c2c2c"/><path d="M8.7 13.2H21L24.6 16.8V27.6H8.7Z" fill="#3a3a3a" stroke="#c9c9c9" stroke-width="1.8"/><rect x="11.6" y="15.8" width="9.6" height="5.8" fill="#3fa1e2"/><path d="M11.6 24.4H16.6M18.6 24.4H21.6" stroke="#c9c9c9" stroke-width="1.6"/></svg>
<svg class="a" style="left:84px;top:602px;" width="34" height="32" viewBox="0 0 34 32"><path d="M2 25V4Q2 2 4 2H12.5Q14.4 2 15.4 3.2Q16.3 4.3 18 4.3H30.75V25Z" fill="#e6c62f"/><rect x="4.4" y="6.8" width="24" height="3.5" fill="#2c2c2c"/><path d="M25.5 17.2C23 13.4 15 12.4 9.4 15C5 17 4.6 21.6 8 24.2C10.6 26 13.4 25.4 14.4 23.8" fill="#4a4a4a" stroke="#c4c4c4" stroke-width="1.7"/><path d="M10 19.4A3 2.4 0 1 1 10.4 22.6" fill="#333" stroke="#c4c4c4" stroke-width="1.3"/><circle cx="16" cy="16.6" r="1.2" fill="#4caf52"/><circle cx="20.4" cy="17.4" r="1.2" fill="#3fa1e2"/><circle cx="12.4" cy="17.6" r="1.1" fill="#d8562e"/><path d="M29 17.4L19 25.4" stroke="#2c2c2c" stroke-width="6" stroke-linecap="round"/><path d="M28.4 17.8L19.6 24.8" stroke="#cfcfcf" stroke-width="3.4" stroke-linecap="round"/><path d="M19.6 24L15 27.4L17 29.6L21.4 26Z" fill="#e8973a"/></svg>
<svg class="a" style="left:84px;top:647px;" width="34" height="32" viewBox="0 0 34 32"><path d="M2 25V4Q2 2 4 2H12.5Q14.4 2 15.4 3.2Q16.3 4.3 18 4.3H30.75V25Z" fill="#e6c62f"/><rect x="4.4" y="6.8" width="24" height="3.5" fill="#2c2c2c"/><path d="M14.6 17.2L22.4 22.6L17.4 23.6L15.6 27Z" fill="#a9a9b2" stroke="#77777e" stroke-width=".8"/></svg>
<svg class="a" style="left:84px;top:692px;" width="34" height="32" viewBox="0 0 34 32"><path d="M2 25V4Q2 2 4 2H12.5Q14.4 2 15.4 3.2Q16.3 4.3 18 4.3H30.75V25Z" fill="#e6c62f"/><rect x="4.4" y="6.8" width="24" height="3.5" fill="#2c2c2c"/><path d="M13.5 8.6L3.6 19.4H23.4Z" fill="#2c2c2c"/><path d="M13.5 10L5.2 19.3H21.8Z" fill="#d8452a"/><rect x="18" y="10.6" width="2.6" height="5" fill="#d8452a"/><rect x="8.2" y="19.3" width="10.6" height="7" fill="#e9e9e9"/><rect x="11.4" y="20.6" width="4.2" height="4.2" fill="#3fa1e2"/><rect x="5.8" y="26.2" width="15.4" height="2" fill="#4caf52"/></svg>
<svg class="a" style="left:54px;top:735px;" width="36" height="30" viewBox="0 0 36 30"><g transform="translate(-0.4 -0.2) scale(0.84)"><path d="M8 20.6C4.5 20.6 2.8 18 2.8 15.4C2.8 12.4 5 10.4 7.8 10.2C8 6 11 2.8 16 2.8C20 2.8 22.6 5 23.6 8C24.3 7.7 25.1 7.6 26 7.7C29.4 8 32.2 10.6 32.2 14.6C32.2 18 30 20.6 27 20.6Z" fill="#1f5f96" stroke="#3fa1e2" stroke-width="2" stroke-linejoin="round"/></g><g transform="translate(8.6 8.6) scale(0.76 0.9)"><path d="M8 20.6C4.5 20.6 2.8 18 2.8 15.4C2.8 12.4 5 10.4 7.8 10.2C8 6 11 2.8 16 2.8C20 2.8 22.6 5 23.6 8C24.3 7.7 25.1 7.6 26 7.7C29.4 8 32.2 10.6 32.2 14.6C32.2 18 30 20.6 27 20.6Z" fill="#1f5f96" stroke="#333" stroke-width="6"/><path d="M8 20.6C4.5 20.6 2.8 18 2.8 15.4C2.8 12.4 5 10.4 7.8 10.2C8 6 11 2.8 16 2.8C20 2.8 22.6 5 23.6 8C24.3 7.7 25.1 7.6 26 7.7C29.4 8 32.2 10.6 32.2 14.6C32.2 18 30 20.6 27 20.6Z" fill="#1f5f96" stroke="#3fa1e2" stroke-width="2" stroke-linejoin="round"/></g></svg>
<svg class="a" style="left:84px;top:778px;" width="36" height="36" viewBox="0 0 36 36"><path d="M8 20.6C4.5 20.6 2.8 18 2.8 15.4C2.8 12.4 5 10.4 7.8 10.2C8 6 11 2.8 16 2.8C20 2.8 22.6 5 23.6 8C24.3 7.7 25.1 7.6 26 7.7C29.4 8 32.2 10.6 32.2 14.6C32.2 18 30 20.6 27 20.6Z" fill="#1f5f96" stroke="#3fa1e2" stroke-width="2" stroke-linejoin="round"/><g transform="translate(17.9 12.6) scale(1.0)"><path d="M-7.6 7.6Q-7.6 5.6 -5.6 5.6H5.6Q7.6 5.6 7.6 7.6V13.6Q7.6 14.6 6.6 14.6H4.8V19.4Q4.8 20.2 4 20.2H-4Q-4.8 20.2 -4.8 19.4V14.6H-6.6Q-7.6 14.6 -7.6 13.6Z" fill="#2f7a37" stroke="#5fc765" stroke-width="1.90" stroke-linejoin="round"/><circle r="3.7" fill="#2f7a37" stroke="#5fc765" stroke-width="1.90"/></g></svg>
<svg class="a" style="left:84px;top:823px;" width="36" height="36" viewBox="0 0 36 36"><path d="M8 20.6C4.5 20.6 2.8 18 2.8 15.4C2.8 12.4 5 10.4 7.8 10.2C8 6 11 2.8 16 2.8C20 2.8 22.6 5 23.6 8C24.3 7.7 25.1 7.6 26 7.7C29.4 8 32.2 10.6 32.2 14.6C32.2 18 30 20.6 27 20.6Z" fill="#1f5f96" stroke="#3fa1e2" stroke-width="2" stroke-linejoin="round"/><polygon points="17.90,14.60 20.20,21.23 27.22,21.37 21.63,25.61 23.66,32.33 17.90,28.32 12.14,32.33 14.17,25.61 8.58,21.37 15.60,21.23" fill="#e3c52d"/></svg>
<svg class="a" style="left:84px;top:868px;" width="36" height="36" viewBox="0 0 36 36"><path d="M8 20.6C4.5 20.6 2.8 18 2.8 15.4C2.8 12.4 5 10.4 7.8 10.2C8 6 11 2.8 16 2.8C20 2.8 22.6 5 23.6 8C24.3 7.7 25.1 7.6 26 7.7C29.4 8 32.2 10.6 32.2 14.6C32.2 18 30 20.6 27 20.6Z" fill="#1f5f96" stroke="#3fa1e2" stroke-width="2" stroke-linejoin="round"/><g transform="translate(19.7 15.2) scale(0.52)"><path d="M-7.6 7.6Q-7.6 5.6 -5.6 5.6H5.6Q7.6 5.6 7.6 7.6V13.6Q7.6 14.6 6.6 14.6H4.8V19.4Q4.8 20.2 4 20.2H-4Q-4.8 20.2 -4.8 19.4V14.6H-6.6Q-7.6 14.6 -7.6 13.6Z" fill="#2f7a37" stroke="#5fc765" stroke-width="3.65" stroke-linejoin="round"/><circle r="3.7" fill="#2f7a37" stroke="#5fc765" stroke-width="3.65"/></g><g transform="translate(12.3 21.6) scale(0.52)"><path d="M-7.6 7.6Q-7.6 5.6 -5.6 5.6H5.6Q7.6 5.6 7.6 7.6V13.6Q7.6 14.6 6.6 14.6H4.8V19.4Q4.8 20.2 4 20.2H-4Q-4.8 20.2 -4.8 19.4V14.6H-6.6Q-7.6 14.6 -7.6 13.6Z" fill="#1f5f96" stroke="#3fa1e2" stroke-width="3.65" stroke-linejoin="round"/><circle r="3.7" fill="#1f5f96" stroke="#3fa1e2" stroke-width="3.65"/></g><g transform="translate(27.7 21.6) scale(0.52)"><path d="M-7.6 7.6Q-7.6 5.6 -5.6 5.6H5.6Q7.6 5.6 7.6 7.6V13.6Q7.6 14.6 6.6 14.6H4.8V19.4Q4.8 20.2 4 20.2H-4Q-4.8 20.2 -4.8 19.4V14.6H-6.6Q-7.6 14.6 -7.6 13.6Z" fill="#9a5a1a" stroke="#f0973a" stroke-width="3.65" stroke-linejoin="round"/><circle r="3.7" fill="#9a5a1a" stroke="#f0973a" stroke-width="3.65"/></g></svg>
<svg class="a" style="left:84px;top:913px;" width="36" height="36" viewBox="0 0 36 36"><path d="M8 20.6C4.5 20.6 2.8 18 2.8 15.4C2.8 12.4 5 10.4 7.8 10.2C8 6 11 2.8 16 2.8C20 2.8 22.6 5 23.6 8C24.3 7.7 25.1 7.6 26 7.7C29.4 8 32.2 10.6 32.2 14.6C32.2 18 30 20.6 27 20.6Z" fill="#1f5f96" stroke="#3fa1e2" stroke-width="2" stroke-linejoin="round"/><rect x="10.4" y="15.4" width="15.4" height="17" fill="#2f7a37" stroke="#5fc765" stroke-width="1.8"/><rect x="15" y="13.6" width="6.2" height="2" fill="#5fc765"/><path d="M13.8 18.6V22M18.1 18.6V22M22.4 18.6V22" stroke="#5fc765" stroke-width="2"/><rect x="15.6" y="26" width="5" height="6.4" fill="#333" stroke="#5fc765" stroke-width="1.6"/><path d="M7.6 32.6H28.6" stroke="#5fc765" stroke-width="1.9"/></svg>
<svg class="a" style="left:84px;top:958px;" width="36" height="36" viewBox="0 0 36 36"><path d="M8 20.6C4.5 20.6 2.8 18 2.8 15.4C2.8 12.4 5 10.4 7.8 10.2C8 6 11 2.8 16 2.8C20 2.8 22.6 5 23.6 8C24.3 7.7 25.1 7.6 26 7.7C29.4 8 32.2 10.6 32.2 14.6C32.2 18 30 20.6 27 20.6Z" fill="#1f5f96" stroke="#3fa1e2" stroke-width="2" stroke-linejoin="round"/></svg>
<svg class="a" style="left:84px;top:1003px;" width="36" height="36" viewBox="0 0 36 36"><path d="M8 20.6C4.5 20.6 2.8 18 2.8 15.4C2.8 12.4 5 10.4 7.8 10.2C8 6 11 2.8 16 2.8C20 2.8 22.6 5 23.6 8C24.3 7.7 25.1 7.6 26 7.7C29.4 8 32.2 10.6 32.2 14.6C32.2 18 30 20.6 27 20.6Z" fill="#1f5f96" stroke="#3fa1e2" stroke-width="2" stroke-linejoin="round"/><path d="M8.8 14.4Q8.8 12.4 10.8 12.4H24.4V29.4H26.6V33.2H11Q8.8 33.2 8.8 31Z" fill="#2f7a37" stroke="#5fc765" stroke-width="1.8" stroke-linejoin="round"/><path d="M9.4 30.6Q9.8 29.4 11.6 29.4H24.4" fill="none" stroke="#5fc765" stroke-width="1.5"/><path d="M13.4 15.2V25.6H21.6Q21 19 13.4 15.2ZM13.4 21H19.6M17 18V25.6" fill="none" stroke="#5fc765" stroke-width="1.5"/></svg>
<svg class="a" style="left:54px;top:1048px;" width="36" height="36" viewBox="0 0 36 36"><polygon points="17.00,3.20 20.62,13.62 31.65,13.84 22.86,20.50 26.05,31.06 17.00,24.76 7.95,31.06 11.14,20.50 2.35,13.84 13.38,13.62" fill="#e3c52d"/></svg>
<svg class="a" style="left:661px;top:299px;" width="32" height="32" viewBox="0 0 32 32"><path d="M2.1 2.2H22.1L30.1 10.4V30.2H2.1Z" fill="#2a2a2a" stroke="#adadad" stroke-width="2.1"/><path d="M4.7 5.1H21V11.6H27.7V20.1H4.7Z" fill="#3fa1e2"/><path d="M22.1 2.2V10.4H30.1" fill="none" stroke="#adadad" stroke-width="1.8"/><path d="M10 10.5L13 12L15.5 9.5L18.5 8L20 10.5L23.5 12.5L25 15L21.5 17.5L16 18.5L12 16.5L12.5 13.5Z" fill="#2a74b8" opacity=".85"/><path d="M4.8 23.2H15M4.8 26.8H11.6" stroke="#adadad" stroke-width="1.8"/><path d="M20.2 27.8L23.6 24.2L27 27.8Z" fill="#3fa1e2"/></svg>
<svg class="a" style="left:823px;top:300px;" width="30.5" height="30.5" viewBox="0 0 30.5 30.5"><rect x="1.0166666666666666" y="1.0166666666666666" width="28.466666666666665" height="28.466666666666665" fill="#4aa83f" stroke="#9c9c9c" stroke-width="2"/><path d="M20.3 2.2H28.3V17.3L24.4 18.8L21.9 17.8L18.8 21.3L17.8 26.4L16.3 28.3H10.2L9.7 24.4L7.1 22.9L9.1 19.8L11.2 20.3L12.7 17.3L15.8 15.8L16.8 12.2L19.3 8.6Z" fill="#2a74c0"/></svg>
<svg class="a" style="left:793px;top:356.4px;" width="30" height="30" viewBox="0 0 30 30"><rect x="1.0" y="1.0" width="28.0" height="28.0" fill="#4aa83f" stroke="#9c9c9c" stroke-width="2"/><path d="M20.0 2.2H27.8V17.0L24.0 18.5L21.5 17.5L18.5 21.0L17.5 26.0L16.0 27.8H10.0L9.5 24.0L7.0 22.5L9.0 19.5L11.0 20.0L12.5 17.0L15.5 15.5L16.5 12.0L19.0 8.5Z" fill="#2a74c0"/></svg>
<svg class="a" style="left:963px;top:302px;" width="30" height="26" viewBox="0 0 30 26"><path d="M2 24V8Q8 1.5 17 2.4H27V24Z" fill="#57a6de" opacity=".55"/><rect x="3" y="5.8" width="24" height="3.4" fill="#2d3e50"/><path d="M13 22.4C15 17 21 13.6 27.6 13V22.4Z" fill="#2e8f3c"/><path d="M11.4 22.4C13.4 19.4 17 18 21 19.4L24 22.4Z" fill="#1b74b4"/></svg>
<svg class="a" style="left:3458px;top:1902px;" width="36" height="28" viewBox="0 0 36 28"><rect x="3.2" y="3" width="28.6" height="20.6" fill="#3a3a3a" stroke="#c9c9c9" stroke-width="1.7"/><path d="M3.2 6.3H31.8M12.4 6.3V23.6M3.2 15H12.4" stroke="#c9c9c9" stroke-width="1.6" fill="none"/><rect x="14" y="8" width="16.4" height="14.4" fill="#5a5a5a"/><rect x="5" y="8.2" width="5.6" height="4.6" fill="#555"/><rect x="5" y="16.6" width="5.6" height="5" fill="#555"/></svg>
<svg class="a" style="left:3504px;top:1900px;" width="34" height="32" viewBox="0 0 34 32"><rect x="4" y="3.2" width="24.6" height="26.2" fill="#2e2e2e" stroke="#c9c9c9" stroke-width="1.7"/><rect x="7.4" y="6.6" width="5.6" height="4" fill="#4aa8f0"/><rect x="7.4" y="14.2" width="5.6" height="4" fill="#4aa8f0"/><rect x="7.4" y="21.6" width="5.6" height="4" fill="#4aa8f0"/><path d="M15.4 8.6H26M15.4 16.2H26M15.4 23.6H26" stroke="#c9c9c9" stroke-width="1.6"/></svg>
<svg class="a" style="left:3548px;top:1898px;" width="34" height="34" viewBox="0 0 34 34"><rect x="3.2" y="3.4" width="11.6" height="11.2" fill="#1b5a8a" stroke="#c9c9c9" stroke-width="1.8"/><rect x="18.4" y="3.4" width="11.6" height="11.2" fill="#3a3a3a" stroke="#c9c9c9" stroke-width="1.8"/><rect x="3.2" y="18.6" width="11.6" height="11.2" fill="#3a3a3a" stroke="#c9c9c9" stroke-width="1.8"/><rect x="18.4" y="18.6" width="11.6" height="11.2" fill="#1b5a8a" stroke="#c9c9c9" stroke-width="1.8"/></svg>
</div></body></html>
